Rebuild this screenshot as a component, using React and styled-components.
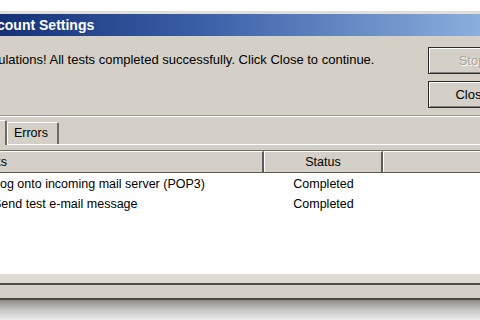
import React from 'react';
import styled, { createGlobalStyle } from 'styled-components';

const GlobalStyle = createGlobalStyle`
  html, body {
    margin: 0;
    padding: 0;
    background: #ffffff;
    overflow: hidden;
  }
  body {
    font-family: "Liberation Sans", Arial, sans-serif;
    font-size: 12.5px;
    color: #000;
  }
`;

const Page = styled.div`
  width: 480px;
  height: 320px;
  overflow: hidden;
  padding-top: 11px;
  box-sizing: border-box;
  background: #ffffff;
`;

// the dialog runs off both sides of the shot, so it is wider than the page
const Window = styled.div`
  margin-left: -60px;
  width: 640px;
  background: #d4d0c8;
  border-top: 3px solid #e2dfd8;
`;

const TitleBar = styled.div`
  height: 22px;
  line-height: 23px;
  padding-left: 8px;
  background: linear-gradient(90deg, #0a246a 0%, #3a5ea6 40%, #a6caf0 100%);
  color: #ffffff;
  font-weight: bold;
  font-size: 14px;
  white-space: nowrap;
`;

const Body = styled.div`
  padding-top: 11px;
`;

const TopRow = styled.div`
  display: flex;
  justify-content: space-between;
  height: 66px;
`;

const Message = styled.div`
  padding: 6px 0 0 12px;
  line-height: 14px;
  font-size: 13px;
  white-space: nowrap;
`;

const ButtonColumn = styled.div`
  display: flex;
  flex-direction: column;
  gap: 7px;
  width: 88px;
  margin-right: 64px;
`;

const Button = styled.div`
  height: 27px;
  box-sizing: border-box;
  border: 1px solid #2b2b2b;
  box-shadow: inset 1px 1px #ffffff, inset -1px -1px #808080;
  display: flex;
  align-items: center;
  justify-content: center;
  font-size: 13px;
  color: ${p => (p.disabled ? '#a7a49e' : '#000')};
  text-shadow: ${p => (p.disabled ? '1px 1px #ffffff' : 'none')};
`;

const Separator = styled.div`
  margin-top: 2px;
  height: 0;
  border-top: 1px solid #a09c94;
  border-bottom: 1px solid #ffffff;
`;

const TabStrip = styled.div`
  display: flex;
  align-items: flex-end;
  padding-left: 17px;
  margin-top: 3px;
  height: 24px;
`;

const Tab = styled.div`
  box-sizing: border-box;
  height: ${p => (p.active ? '25px' : '22px')};
  margin-bottom: ${p => (p.active ? '-1px' : '0')};
  padding: 0 9px 0 6px;
  line-height: 21px;
  background: #d4d0c8;
  border-top: 1px solid #ffffff;
  border-left: 1px solid #ffffff;
  border-right: 2px solid #6f6c66;
  border-top-right-radius: 2px;
  position: relative;
  z-index: ${p => (p.active ? 1 : 0)};
`;

const TabPanel = styled.div`
  border-top: 1px solid #ffffff;
  padding: 5px 0 0 26px;
`;

const ListView = styled.div`
  background: #ffffff;
  border-top: 1px solid #6f6c66;
  border-left: 1px solid #6f6c66;
  height: 123px;
`;

const HeaderRow = styled.div`
  display: grid;
  grid-template-columns: 297px 119px 1fr;
  height: 21px;
  background: #d4d0c8;
  border-bottom: 1px solid #5e5b56;
`;

const HeaderCell = styled.div`
  line-height: 20px;
  text-align: ${p => (p.center ? 'center' : 'left')};
  padding-left: ${p => (p.center ? '0' : '7px')};
  border-top: 1px solid #ffffff;
  border-left: 1px solid #ffffff;
  border-right: 2px solid #5e5b56;
  white-space: nowrap;
`;

const Rows = styled.div`
  padding-top: 1px;
`;

const Row = styled.div`
  display: grid;
  grid-template-columns: 297px 119px 1fr;
  height: 20px;
  align-items: center;
`;

const Cell = styled.div`
  text-align: ${p => (p.center ? 'center' : 'left')};
  padding-left: ${p => (p.center ? '0' : '26px')};
  white-space: nowrap;
`;

const BottomBand = styled.div`
  height: 9px;
  background: #dedbd4;
  border-bottom: 2px solid #4f4d49;
`;

const FrameBand = styled.div`
  height: 13px;
  background: #d4d0c8;
  border-bottom: 2px solid #4a4844;
`;

const Shadow = styled.div`
  height: 30px;
  background: linear-gradient(180deg, #8d8c8a 0%, #c8c8c8 35%, #f4f4f4 75%, #ffffff 100%);
`;

const tasks = [
  { name: 'Log onto incoming mail server (POP3)', status: 'Completed' },
  { name: 'Send test e-mail message', status: 'Completed' },
];

export default function App() {
  return (
    <>
      <GlobalStyle />
      <Page>
        <Window>
          <TitleBar>Test Account Settings</TitleBar>
          <Body>
            <TopRow>
              <Message>
                Congratulations! All tests completed successfully. Click Close to continue.
              </Message>
              <ButtonColumn>
                <Button disabled>Stop</Button>
                <Button>Close</Button>
              </ButtonColumn>
            </TopRow>
            <Separator />
            <TabStrip>
              <Tab active>Tasks</Tab>
              <Tab>Errors</Tab>
            </TabStrip>
            <TabPanel>
              <ListView>
                <HeaderRow>
                  <HeaderCell>Tasks</HeaderCell>
                  <HeaderCell center>Status</HeaderCell>
                  <HeaderCell />
                </HeaderRow>
                <Rows>
                  {tasks.map(t => (
                    <Row key={t.name}>
                      <Cell>{t.name}</Cell>
                      <Cell center>{t.status}</Cell>
                      <Cell />
                    </Row>
                  ))}
                </Rows>
              </ListView>
            </TabPanel>
            <BottomBand />
            <FrameBand />
          </Body>
        </Window>
        <Shadow />
      </Page>
    </>
  );
}
